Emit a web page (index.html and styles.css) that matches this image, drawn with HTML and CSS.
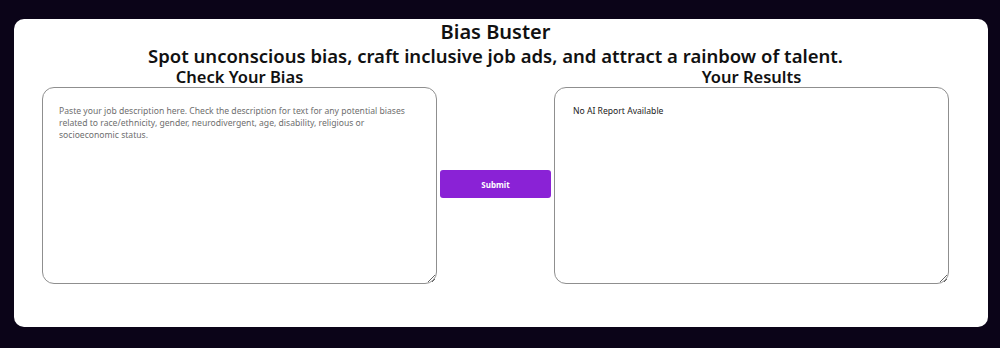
FILE: index.html
```html
<!DOCTYPE html>
<html lang="en">

<head>
  <meta charset="UTF-8">
  <title>Bias Buster</title>
  <link rel="stylesheet" href="styles.css">
</head>

<body>
  <div id="card">
    <div id="header">
      <h1>Bias Buster</h1>
      <h2>Spot unconscious bias, craft inclusive job ads, and attract a rainbow of talent.</h2>
    </div>
    <div id="workspace">
      <h3 class="panelTitle">Check Your Bias</h3>
      <div></div>
      <h3 class="panelTitle">Your Results</h3>
      <textarea id="input" placeholder="Paste your job description here. Check the description for text for any potential biases related to race/ethnicity, gender, neurodivergent, age, disability, religious or socioeconomic status."></textarea>
      <button id="submit">Submit</button>
      <textarea id="output" readonly>No AI Report Available</textarea>
    </div>
  </div>
</body>

</html>
```

FILE: styles.css
```css
html,
body {
  margin: 0;
  height: 100%;
}

body {
  background: #0b0418;
  font-family: "Noto Sans", sans-serif;
  color: #111;
  padding: 19px 12px 21px 14px;
  box-sizing: border-box;
}

#card {
  background: #fff;
  border-radius: 10px;
  height: 100%;
  padding: 0 0 0 28px;
  box-sizing: border-box;
}

#header {
  width: 907px;
  text-align: center;
}

h1 {
  margin: 0;
  padding-top: 1px;
  font-size: 20px;
  font-weight: 600;
  line-height: 24px;
}

h2 {
  margin: 0;
  font-size: 18.5px;
  font-weight: 600;
  line-height: 23px;
}

#workspace {
  display: grid;
  grid-template-columns: 395px 111px 395px;
  grid-template-rows: 20px 197px;
  column-gap: 3px;
}

.panelTitle {
  margin: 0;
  text-align: center;
  font-size: 16.5px;
  font-weight: 600;
  line-height: 20px;
}

textarea {
  font-family: inherit;
  font-size: 8.6px;
  line-height: 12px;
  border: 1px solid #8f8f8f;
  border-radius: 12px;
  padding: 17px 16px;
  margin: 0;
  box-sizing: border-box;
  width: 100%;
  height: 100%;
  resize: both;
  outline: none;
  color: #222;
}

textarea::placeholder {
  color: #6e6e6e;
}

#output {
  padding-left: 18px;
}

#submit {
  align-self: center;
  height: 28px;
  margin-top: -3px;
  border: none;
  border-radius: 3px;
  background: #8a22d6;
  color: #fff;
  font-family: inherit;
  font-size: 8px;
  font-weight: 700;
  cursor: pointer;
}
```
